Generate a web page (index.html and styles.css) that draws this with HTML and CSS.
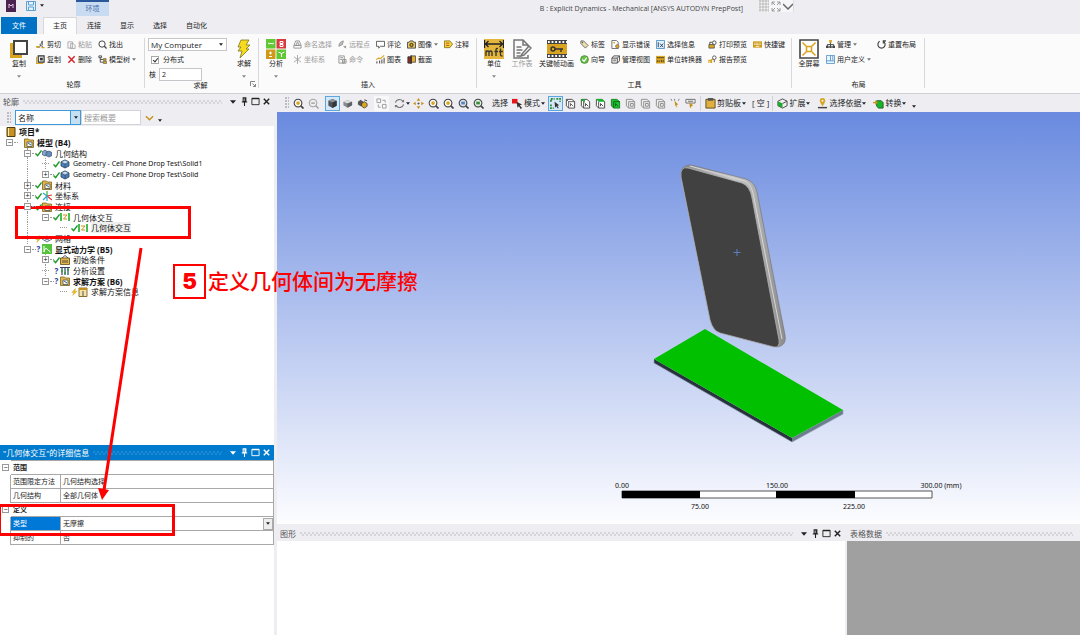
FILE: index.html
```html
<!DOCTYPE html>
<html lang="zh-CN">
<head>
    <meta charset="UTF-8">
    <meta name="viewport" content="width=device-width, initial-scale=1.0">
    <title>B : Explicit Dynamics - Mechanical</title>
    <link rel="stylesheet" href="styles.css">
</head>
<body>
    <svg class="sprite" aria-hidden="true">
        <!-- common -->
        <symbol id="caret" viewBox="0 0 5 3"><path d="M0 0h5L2.5 3z" fill="currentColor"/></symbol>
        <symbol id="pin" viewBox="0 0 10 10"><path d="M3.5 1h3v4h-3zM2 5.500h6M5 5.500V10" fill="none" stroke="currentColor" stroke-width="1.2"/><path d="M5 1h1.500v4H5z" fill="currentColor"/></symbol>
        <symbol id="box" viewBox="0 0 10 10"><path d="M1 1.500h8v7H1z" fill="none" stroke="currentColor"/><path d="M1 1h8v1.500H1z" fill="currentColor"/></symbol>
        <symbol id="close" viewBox="0 0 10 10"><path d="M2 2l6 6M8 2L2 8" stroke="currentColor" stroke-width="1.6"/></symbol>
        <!-- ribbon, large -->
        <symbol id="copy-big" viewBox="0 0 20 20"><path d="M1 4h12v15H1z" fill="#d9a520"/><path d="M5 2h13v13H5z" fill="#fff" stroke="#444" stroke-width="2"/></symbol>
        <symbol id="bolt-big" viewBox="0 0 20 20"><path d="M7 1h8l-3 5h4l-4 4h3L6 19l2-7H4l3-4H4z" fill="#f6dc1c" stroke="#7d7320" stroke-width=".8"/></symbol>
        <symbol id="analysis" viewBox="0 0 20 20"><path d="M0 0h9.500v9.500H0zM10.500 10.500H20V20h-9.500z" fill="#5fc832"/><path d="M10.500 0H20v9.500h-9.500z" fill="#d8383f"/><path d="M0 10.500h9.500V20H0z" fill="#cf9a17"/><path d="M2 4l2 1 1-1 1 1 2-1M3 14h3M4.500 12.500v3M3 17.500h3M12.500 13q3 3 6 0M15.500 14v4M14 2.500h3v2h-3zM14 5.500h3v2h-3z" fill="none" stroke="#fff"/></symbol>
        <symbol id="units" viewBox="0 0 20 20"><path d="M0 0h20v20H0z" fill="#e5b63c"/><path d="M1 5h18M4.500 2L1.500 5l3 3M15.500 2l3 3-3 3M.5 1v8M19.500 1v8" fill="none" stroke="#222" stroke-width="1.3"/><path d="M2 17v-5.500M2 13q2-2 3 0v4M5 13q2-2 3 0v4M12 17v-6q0-2 2-1.500M10.500 12.500H14M16.500 9.500V16q0 1 2 1M15 12.500h4" fill="none" stroke="#333" stroke-width="1.3"/></symbol>
        <symbol id="sheet" viewBox="0 0 20 20"><path d="M16 8V6l-5-5H2v18h14v-3M11 1v5h5M4.500 8h5M4.500 11h6M4.500 14h4M4.500 17h5M10 15l7-8 2 2-7 7-3 1z" fill="none" stroke="#777" stroke-width="1.5"/></symbol>
        <symbol id="film" viewBox="0 0 20 20"><path d="M0 1h20v18H0z" fill="#444"/><path d="M0 5h20v10H0z" fill="#d9a520"/><path d="M1 3h19M1 17h19" stroke="#fff" stroke-width="1.8" stroke-dasharray="1.8 1.8"/><circle cx="6" cy="10" r="2" fill="none" stroke="#333" stroke-width="1.4"/><path d="M8 10h8M14 10v3" stroke="#333" stroke-width="1.4"/></symbol>
        <symbol id="full" viewBox="0 0 20 20"><path d="M1 1h18v18H1z" fill="#fff" stroke="#444" stroke-width="1.6"/><path d="M7.500 7.500h5v5h-5zM3.500 3.500l4 4M16.500 3.500l-4 4M3.500 16.500l4-4M16.500 16.500l-4-4" fill="none" stroke="#d9a520" stroke-width="1.6"/></symbol>
        <!-- ribbon, small -->
        <symbol id="cut" viewBox="0 0 10 10"><path d="M1 8h3l3-7M4 5l4 3M7 1v5" fill="none" stroke="#555"/><path d="M0 7.500h4M6 8.500h3.500" stroke="#d9a520" stroke-width="1.5"/></symbol>
        <symbol id="paste" viewBox="0 0 10 10"><path d="M1 2h5v7H1zM4 4h3l2 2v3.500H4z" fill="#f6f6f6" stroke="#999" stroke-width=".8"/></symbol>
        <symbol id="find" viewBox="0 0 10 10"><circle cx="4.500" cy="4.500" r="3.500" fill="none" stroke="#444" stroke-width="1.1"/><path d="M7 7l2.500 2.500" stroke="#444" stroke-width="1.4"/></symbol>
        <symbol id="copy" viewBox="0 0 10 10"><path d="M.5 2v7.500H8" fill="none" stroke="#d9a520" stroke-width="1.4"/><path d="M2.500 1H9v7H2.500z" fill="#eee" stroke="#333" stroke-width="1.3"/><path d="M4.500 3h3v3h-3z" fill="#333"/></symbol>
        <symbol id="del" viewBox="0 0 10 10"><path d="M1.500 1.500l7 7M8.500 1.500l-7 7" stroke="#d3242b" stroke-width="1.6"/></symbol>
        <symbol id="tree" viewBox="0 0 10 10"><path d="M1 1h3v2H1zM2.500 3v5H6M2.500 5H6" fill="none" stroke="#444"/><path d="M6 4h3v2H6zM6 7h3.500v2.500H6z" fill="#d9a520" stroke="#444" stroke-width=".6"/></symbol>
        <symbol id="named" viewBox="0 0 10 10"><path d="M1 9h8V6L7 1H3L1 6zM3 6l2-4 2 4zM1 6h8" fill="none" stroke="#888" stroke-width=".9"/></symbol>
        <symbol id="axes-gray" viewBox="0 0 10 10"><path d="M5 0v10M1 2l8 6M9 2L1 8" stroke="#999" stroke-width=".9"/></symbol>
        <symbol id="remote" viewBox="0 0 10 10"><path d="M1 7q0-5 5-6l-1 4zM6 7l3 2" fill="#bbb" stroke="#888" stroke-width=".8"/><circle cx="8" cy="7.500" r="1.200" fill="#999"/></symbol>
        <symbol id="cmd" viewBox="0 0 10 10"><path d="M1 1h6v8H1zM2.500 3h3M2.500 5h2M5 5h4v4H5zM6 7h2" fill="#f4f4f4" stroke="#888" stroke-width=".9"/></symbol>
        <symbol id="comment" viewBox="0 0 10 10"><path d="M.5 1.500h9V7H5L3 9V7H.5z" fill="#fff" stroke="#555"/></symbol>
        <symbol id="chart" viewBox="0 0 10 10"><path d="M1 9.500V7M4 9.500V6M6.500 9.500V5M9 9.500V3" stroke="#555" stroke-width="1.2"/><path d="M0 5l3-1.500 2 .5L9 .5" fill="none" stroke="#d9a520" stroke-width="1.2"/></symbol>
        <symbol id="camera" viewBox="0 0 10 10"><path d="M.5 2.500h2l1-1.500h3l1 1.500h2V9h-9z" fill="#e8c868" stroke="#444"/><circle cx="5" cy="5.500" r="1.800" fill="#d9a520" stroke="#222"/></symbol>
        <symbol id="section" viewBox="0 0 10 10"><path d="M1 2h4v7H1z" fill="#8b2c20" stroke="#333"/><path d="M5 1h4.500v7H5z" fill="#e2b030" stroke="#555"/><path d="M4.500 0v10" stroke="#222"/></symbol>
        <symbol id="note" viewBox="0 0 10 10"><path d="M.5 1h6l3 3.500-3 4h-6z" fill="#f3dc3a" stroke="#7a6b10" stroke-width=".9"/><path d="M2 3.500h4M2 6h4" stroke="#c23" stroke-width=".9"/></symbol>
        <symbol id="tag" viewBox="0 0 10 10"><path d="M1 1h3l5 5-3 3-5-5z" fill="#eadfa8" stroke="#555" stroke-width=".9"/><circle cx="2.800" cy="2.800" r=".8" fill="#555"/></symbol>
        <symbol id="guide" viewBox="0 0 10 10"><circle cx="5" cy="5" r="4.300" fill="#6cbf4b" stroke="#3f8f2a"/><path d="M2.500 5l2 2 3-4" fill="none" stroke="#fff" stroke-width="1.3"/></symbol>
        <symbol id="err" viewBox="0 0 10 10"><path d="M1 .5h5l2 2v7H1z" fill="#fff" stroke="#666"/><path d="M2.500 3h2" stroke="#d9a520" stroke-width="1.4"/><circle cx="7" cy="7" r="2" fill="#d9a520" stroke="#666" stroke-width=".6"/></symbol>
        <symbol id="views" viewBox="0 0 10 10"><path d="M1 3.500h6V9H1zM1 3.500L3 1h6.500v5.500L7 9M7 3.500L9.500 1" fill="#f4f4f4" stroke="#444"/><path d="M2.500 5h3v2h-3z" fill="#888"/></symbol>
        <symbol id="selinfo" viewBox="0 0 10 10"><path d="M.5 .5h9v9h-9z" fill="#e3f1fb" stroke="#4a90c8"/><path d="M2.500 2.500V8M4.500 4l3.500 4M8 4L4.500 8" stroke="#235"/></symbol>
        <symbol id="conv" viewBox="0 0 10 10"><path d="M0 1h10v8.500H0z" fill="#d9a520"/><path d="M1 3h8M1.500 8V6M3.500 8V6M6 8V5.500M8 8V5.500" stroke="#333" stroke-width=".9"/></symbol>
        <symbol id="print" viewBox="0 0 10 10"><path d="M1 5h6v4H1z" fill="#d9a520" stroke="#444" stroke-width=".8"/><path d="M2 5V2.500h3" fill="none" stroke="#444"/><circle cx="7" cy="3" r="2" fill="#fff" stroke="#444"/></symbol>
        <symbol id="report" viewBox="0 0 10 10"><path d="M1 9V6h2v3M4 9V5h2" fill="none" stroke="#d9a520" stroke-width="1.2"/><circle cx="7" cy="3" r="2" fill="#fff" stroke="#555"/><path d="M7 5v3" stroke="#555"/></symbol>
        <symbol id="keys" viewBox="0 0 10 10"><path d="M0 1.500h10v7H0z" fill="#cf9a17"/><path d="M1.500 3.500h7M1.500 5h7" stroke="#fff" stroke-dasharray="1 .6"/><path d="M3 7h4" stroke="#fff"/></symbol>
        <symbol id="org" viewBox="0 0 10 10"><path d="M3.500 0h3v3h-3z" fill="#d9a520"/><path d="M5 3v2M1.500 7V5h7v2M5 5v2" fill="none" stroke="#444"/><path d="M0 6.500h3V9H0zM3.700 6.500h2.600V9H3.700zM7 6.500h3V9H7z" fill="#444"/></symbol>
        <symbol id="layout" viewBox="0 0 10 10"><path d="M.5 .5h9v9h-9zM5 .5v6M.5 6.500h9M7.500 1v5" fill="#eaf4fc" stroke="#4a90c8" stroke-width=".9"/></symbol>
        <symbol id="reset" viewBox="0 0 10 10"><path d="M3 1.500a4 4 0 1 0 4 0M7 4V1h3" fill="none" stroke="#444" stroke-width="1.3"/></symbol>
        <!-- view toolbar -->
        <symbol id="zoom-y" viewBox="0 0 12 12"><circle cx="5.500" cy="5.500" r="4.200" fill="#fff" stroke="#444" stroke-width="1.2"/><circle cx="5.500" cy="5.500" r="2" fill="#d9a520"/><path d="M8.500 8.500L11.500 11.500" stroke="#444" stroke-width="1.8"/></symbol>
        <symbol id="zoom-g" viewBox="0 0 12 12"><circle cx="5.500" cy="5.500" r="4.200" fill="#eee" stroke="#999"/><path d="M8.500 8.500l3 3M3.500 5.500h4" stroke="#999" stroke-width="1.3"/></symbol>
        <symbol id="zoom-b" viewBox="0 0 12 12"><circle cx="5.500" cy="5.500" r="4.200" fill="#d8e4f4" stroke="#444" stroke-width="1.2"/><path d="M3.500 4h4v3h-4z" fill="#5f83b5"/><path d="M8.500 8.500l3 3" stroke="#444" stroke-width="1.8"/></symbol>
        <symbol id="zoom-n" viewBox="0 0 12 12"><circle cx="5.500" cy="5.500" r="4.200" fill="#e2f2e0" stroke="#444" stroke-width="1.2"/><path d="M3.500 4h4v3h-4z" fill="#3a8c3a"/><path d="M8.500 8.500l3 3" stroke="#444" stroke-width="1.8"/></symbol>
        <symbol id="cube" viewBox="0 0 12 12"><path d="M6 1l4.500 2v5.500L6 11 1.500 8.500V3z" fill="#4e5358"/><path d="M6 1l4.500 2L6 5 1.500 3z" fill="#8b9196"/><path d="M6 5v6l4.500-2.500V3z" fill="#33373b"/></symbol>
        <symbol id="slab" viewBox="0 0 12 12"><path d="M6 2.500L11 4v4l-5 2.500L1.500 8V4z" fill="#85898d"/><path d="M6 2.500L11 4 6 6 1.500 4z" fill="#dcdcdc"/><path d="M6 6v4.500L11 8V4z" fill="#5d6165"/></symbol>
        <symbol id="cubes" viewBox="0 0 12 12"><path d="M1 4l3-2 3 2v3L4 9 1 7z" fill="#555"/><path d="M5 6l3-2 3 2v3l-3 2-3-2z" fill="#d9a520" stroke="#333" stroke-width=".8"/><path d="M8 2l3 1" stroke="#333"/></symbol>
        <symbol id="link" viewBox="0 0 12 12"><path d="M1 1h4v4H1zM7 7h4v4H7zM7 2.500h3V5M2.500 7v3H5" fill="none" stroke="#999"/></symbol>
        <symbol id="rot" viewBox="0 0 12 12"><path d="M1.500 5a4.500 4.500 0 0 1 8-1.500M10.500 7a4.500 4.500 0 0 1-8 1.500" fill="none" stroke="#777" stroke-width="1.3"/><path d="M8 4.500h3v-3zM4 7.500H1v3z" fill="#777"/></symbol>
        <symbol id="pan" viewBox="0 0 12 12"><path d="M6 0l2 3H4zM6 12l2-3H4zM0 6l3-2v4zM12 6L9 4v4z" fill="#c8921a"/><circle cx="6" cy="6" r="1.200" fill="#555"/></symbol>
        <symbol id="mode" viewBox="0 0 12 12"><path d="M0 1h6v5H0z" fill="#e8141c"/><path d="M5 4l6 3-2.500 1L11 11l-1.500 1-2-3L6 10.500z" fill="#333"/></symbol>
        <symbol id="pick" viewBox="0 0 12 12"><path d="M1 4V1h4M7 1h4v3M1 7v4h3" fill="none" stroke="#2b8a33" stroke-width="2" stroke-dasharray="2 1"/><path d="M5 4l5 4-2 .5 1.500 2.500-1 .5L7 9l-1.500 1.500z" fill="#333"/></symbol>
        <symbol id="sel-box" viewBox="0 0 12 12"><path d="M1.500 1.500h6l3 2.500v7H4L1.500 8.500z" fill="#fff" stroke="#444"/><path d="M4 4h6.500M4 4v7M1.500 1.500L4 4M6 6l3 3M6 6v3" fill="none" stroke="#444" stroke-width=".9"/></symbol>
        <symbol id="sel-edge" viewBox="0 0 12 12"><path d="M1.500 1.500h6l3 2.500v7H4L1.500 8.500z" fill="#fff" stroke="#444"/><path d="M4 4v7M1.500 1.500L4 4" stroke="#444"/><path d="M1 2h3.500v3" fill="none" stroke="#1ba32b" stroke-width="1.6"/><path d="M6 6l3 3M6 6v3" stroke="#444"/></symbol>
        <symbol id="sel-face" viewBox="0 0 12 12"><path d="M1.500 1.500h6l3 2.500v7H4L1.500 8.500z" fill="#fff" stroke="#444"/><path d="M1 1h7l3 3H4z" fill="#16b52a"/><path d="M4 4v7M6 6l3 3M6 6v3" stroke="#444"/></symbol>
        <symbol id="sel-body" viewBox="0 0 12 12"><path d="M1.500 1.500h6l3 2.500v7H4L1.500 8.500z" fill="#17c62c" stroke="#167a20"/><path d="M4 4h6.500M4 4v7M6 6l3 3M6 6v3" stroke="#0d5c16" fill="none"/></symbol>
        <symbol id="sel-gray" viewBox="0 0 12 12"><path d="M1.500 1.500h6l3 2.500v7H4L1.500 8.500z" fill="#eee" stroke="#8b8b8b"/><path d="M4 4h6.500M4 4v7M6 6h3v3H6z" fill="none" stroke="#8b8b8b"/></symbol>
        <symbol id="hit" viewBox="0 0 12 12"><path d="M1 1l1 2M5 1v2M10 1L9 3" stroke="#777"/><path d="M5 3l4 4-2 .5L8 11 5.500 8z" fill="#c8921a"/></symbol>
        <symbol id="probe" viewBox="0 0 12 12"><path d="M1 1.500h10v4H1z" fill="#fff" stroke="#666"/><path d="M3 3.500h6" stroke="#555"/><path d="M5 5l4 3-2 1-.5 2.500L5 9z" fill="#c8921a"/></symbol>
        <symbol id="clip" viewBox="0 0 12 12"><path d="M1 1.500h10V11H1z" fill="#dfb040" stroke="#5c4a18"/><path d="M3 0h6v3H3z" fill="#555"/></symbol>
        <symbol id="extend" viewBox="0 0 12 12"><path d="M6 1l5 2.500v5L6 11 1 8.500v-5z" fill="#eee" stroke="#444"/><path d="M1 3.500L6 6v5L1 8.500z" fill="#1fa82f"/><path d="M6 6l5-2.500" stroke="#444"/></symbol>
        <symbol id="place" viewBox="0 0 12 12"><path d="M6 0a3 3 0 0 1 3 3q0 2-3 6-3-4-3-6a3 3 0 0 1 3-3z" fill="#d9a520"/><circle cx="6" cy="3" r="1" fill="#fff"/><path d="M1 10.500h10" stroke="#444" stroke-width="1.6"/></symbol>
        <symbol id="convert" viewBox="0 0 12 12"><path d="M4 3h5l2 2v6H6L4 9z" fill="#17b52a" stroke="#165f20"/><path d="M0 5h4M2.500 3l2 2-2 2" fill="none" stroke="#c8921a" stroke-width="1.4"/></symbol>
        <!-- tree -->
        <symbol id="project" viewBox="0 0 10 10"><path d="M1 .5h8v9H1z" fill="#c8921a" stroke="#4d3a0c"/><path d="M2.500 1v8" stroke="#fff" stroke-width=".8"/></symbol>
        <symbol id="folder" viewBox="0 0 10 10"><path d="M.5 1h4l1 1h4v7.500h-9z" fill="#e3b646" stroke="#7d6220" stroke-width=".8"/><path d="M3 4h5v4.500H3z" fill="#f8f5e4" stroke="#456" stroke-width=".8"/><path d="M4 5l3 2" stroke="#368"/></symbol>
        <symbol id="geom" viewBox="0 0 10 10"><path d="M0 4l3-2 3 2v2.500L3 8 0 6.500z" fill="#8aa6c8" stroke="#35506f" stroke-width=".7"/><path d="M4 4.500L7 3l3 1.500v3L7 9 4 7.500z" fill="#6a8db8" stroke="#35506f" stroke-width=".7"/></symbol>
        <symbol id="solid" viewBox="0 0 10 10"><path d="M5 1l4 2v4L5 9 1 7V3z" fill="#4d7fb5" stroke="#27415f" stroke-width=".8"/><path d="M5 1l4 2-4 2-4-2z" fill="#c4dcf0" stroke="#27415f" stroke-width=".6"/><path d="M5 5v4" stroke="#27415f" stroke-width=".6"/></symbol>
        <symbol id="axes" viewBox="0 0 10 10"><path d="M5 5V0" stroke="#29b23a" stroke-width="1.2"/><path d="M5 5l5 4M5 5l5-1" stroke="#e03434" stroke-width="1.2"/><path d="M5 5L1 9M5 5L1 2M5 5v5" stroke="#2aa8c8" stroke-width="1.2"/></symbol>
        <symbol id="contact" viewBox="0 0 10 10"><path d="M1 1v8M9 1v8" stroke="#16b02a" stroke-width="1.6"/><path d="M3 3h4L3.500 7H7" fill="none" stroke="#c8921a"/></symbol>
        <symbol id="mesh" viewBox="0 0 10 10"><path d="M0 5l5-3 5 3-5 3zM2.500 3.500l5 3M7.500 3.500l-5 3" fill="#dfe6f4" stroke="#567" stroke-width=".8"/></symbol>
        <symbol id="dyn" viewBox="0 0 10 10"><path d="M0 0h10v10H0z" fill="#55c43c"/><path d="M2 2v6M2 8q1-5 3-3t3.500 3" fill="none" stroke="#fff"/></symbol>
        <symbol id="cond" viewBox="0 0 10 10"><path d="M.5 3h9v6.500h-9z" fill="#e3b646" stroke="#5c4718" stroke-width=".8"/><path d="M2 3l3-2.500L8 3M3 5v3M5 5v3M7 5v3" fill="none" stroke="#444" stroke-width=".9"/></symbol>
        <symbol id="setup" viewBox="0 0 10 10"><path d="M0 1.500h10M2 1v8M5 1v8M8 1v8" stroke="#346" stroke-width="1.2"/><path d="M1 5h2M4 7h2M7 4h2" stroke="#36a04a" stroke-width="2"/></symbol>
        <symbol id="info" viewBox="0 0 10 10"><path d="M1 1h8v8.500H1z" fill="#f3e3a6" stroke="#7d6220" stroke-width=".9"/><path d="M1 1h8v2H1z" fill="#c8921a"/><path d="M5 4v5" stroke="#555"/></symbol>
        <symbol id="ok" viewBox="0 0 8 8"><path d="M.5 4.500L3 7l4.500-6" fill="none" stroke="#1e9b27" stroke-width="1.7"/></symbol>
        <symbol id="todo" viewBox="0 0 8 8"><path d="M5 0L1 4.500h2.500L2 8l5-5H4.500z" fill="#f2c015" stroke="#b98a10" stroke-width=".4"/></symbol>
    </svg>

    <header class="titlebar">
        <svg class="logo" viewBox="0 0 10 12"><path d="M0 0h10v12H0z" fill="#4a2350"/><path d="M3 8V4l2 2 2-2v4" fill="none" stroke="#e2c3e2"/></svg>
        <button class="quick" aria-label="保存"><svg viewBox="0 0 10 10"><path d="M.5 .5h9v9h-9z" fill="#e6f2fb" stroke="#5d9fd2"/><path d="M2.500 .5V4h5V.5M2.500 9.500V6h5v3.500" fill="none" stroke="#5d9fd2"/></svg></button>
        <button class="drop" aria-label="自定义"><svg class="car"><use href="#caret"/></svg></button>
        <span class="context">环境</span>
        <h1>B : Explicit Dynamics - Mechanical [ANSYS AUTODYN PrepPost]</h1>
        <div class="window-tools">
            <svg viewBox="0 0 10 12"><path d="M1 0v12M4 0v12M7 0v12M10 0v12M0 1h10M0 4h10M0 7h10M0 10h10" stroke="#aaa" stroke-width=".7"/></svg>
            <svg viewBox="0 0 10 12"><path d="M1 5V2h3M6 2h3v3M9 8v3H6M4 11H1V8M1 2l3 3M9 2L6 5M9 11L6 8M1 11l3-3" fill="none" stroke="#888" stroke-width=".8"/></svg>
            <svg viewBox="0 0 10 12"><path d="M0 4l5 5 5-5" fill="none" stroke="#666" stroke-width="1.5"/></svg>
        </div>
    </header>

    <nav class="tabs">
        <button class="file">文件</button>
        <button class="active">主页</button>
        <button>连接</button>
        <button>显示</button>
        <button>选择</button>
        <button>自动化</button>
    </nav>

    <section class="ribbon">
        <div class="group outline-group">
            <div class="tools">
                <button class="big"><svg><use href="#copy-big"/></svg>复制<svg class="car"><use href="#caret"/></svg></button>
                <div class="col">
                    <button><svg><use href="#cut"/></svg>剪切</button>
                    <button><svg><use href="#copy"/></svg>复制</button>
                </div>
                <div class="col">
                    <button disabled><svg><use href="#paste"/></svg>粘贴</button>
                    <button><svg><use href="#del"/></svg>删除</button>
                </div>
                <div class="col">
                    <button><svg><use href="#find"/></svg>找出</button>
                    <button><svg><use href="#tree"/></svg>模型树<svg class="car"><use href="#caret"/></svg></button>
                </div>
            </div>
            <h2>轮廓</h2>
        </div>
        <div class="group solve-group">
            <div class="tools">
                <div class="solve-form">
                    <div class="picker">
                        <select aria-label="求解器"><option>My Computer</option></select>
                        <svg class="car"><use href="#caret"/></svg>
                    </div>
                    <label class="dist"><input type="checkbox" checked>分布式</label>
                    <label class="cores">核<input type="text" value="2"></label>
                </div>
                <button class="big"><svg><use href="#bolt-big"/></svg>求解<svg class="car"><use href="#caret"/></svg></button>
            </div>
            <h2>求解</h2>
            <svg class="launcher" viewBox="0 0 6 6"><path d="M.5 5V.5H5M2.500 2.500l3 3M5.500 3v2.500H3" fill="none" stroke="#777" stroke-width=".9"/></svg>
        </div>
        <div class="group insert-group">
            <div class="tools">
                <button class="big"><svg><use href="#analysis"/></svg>分析<svg class="car"><use href="#caret"/></svg></button>
                <div class="col">
                    <button disabled><svg><use href="#named"/></svg>命名选择</button>
                    <button disabled><svg><use href="#axes-gray"/></svg>坐标系</button>
                </div>
                <div class="col">
                    <button disabled><svg><use href="#remote"/></svg>远程点</button>
                    <button disabled><svg><use href="#cmd"/></svg>命令</button>
                </div>
                <div class="col">
                    <button><svg><use href="#comment"/></svg>评论</button>
                    <button><svg><use href="#chart"/></svg>图表</button>
                </div>
                <div class="col">
                    <button><svg><use href="#camera"/></svg>图像<svg class="car"><use href="#caret"/></svg></button>
                    <button><svg><use href="#section"/></svg>截面</button>
                </div>
                <div class="col">
                    <button><svg><use href="#note"/></svg>注释</button>
                </div>
            </div>
            <h2>插入</h2>
        </div>
        <div class="group tool-group">
            <div class="tools">
                <button class="big"><svg><use href="#units"/></svg>单位<svg class="car"><use href="#caret"/></svg></button>
                <button class="big" disabled><svg><use href="#sheet"/></svg>工作表</button>
                <button class="big"><svg><use href="#film"/></svg>关键帧动画</button>
                <div class="col">
                    <button><svg><use href="#tag"/></svg>标签</button>
                    <button><svg><use href="#guide"/></svg>向导</button>
                </div>
                <div class="col">
                    <button><svg><use href="#err"/></svg>显示错误</button>
                    <button><svg><use href="#views"/></svg>管理视图</button>
                </div>
                <div class="col">
                    <button><svg><use href="#selinfo"/></svg>选择信息</button>
                    <button><svg><use href="#conv"/></svg>单位转换器</button>
                </div>
                <div class="col">
                    <button><svg><use href="#print"/></svg>打印预览</button>
                    <button><svg><use href="#report"/></svg>报告预览</button>
                </div>
                <div class="col">
                    <button><svg><use href="#keys"/></svg>快捷键</button>
                </div>
            </div>
            <h2>工具</h2>
        </div>
        <div class="group layout-group">
            <div class="tools">
                <button class="big"><svg><use href="#full"/></svg>全屏幕</button>
                <div class="col">
                    <button><svg><use href="#org"/></svg>管理<svg class="car"><use href="#caret"/></svg></button>
                    <button><svg><use href="#layout"/></svg>用户定义<svg class="car"><use href="#caret"/></svg></button>
                </div>
                <div class="col">
                    <button><svg><use href="#reset"/></svg>重置布局</button>
                </div>
            </div>
            <h2>布局</h2>
        </div>
    </section>

    <main class="workspace">
        <aside class="side">
            <section class="outline">
                <div class="panel-head">
                    <h3>轮廓</h3><span class="dots"></span>
                    <button aria-label="菜单"><svg class="car"><use href="#caret"/></svg></button>
                    <button aria-label="固定"><svg><use href="#pin"/></svg></button>
                    <button aria-label="最大化"><svg><use href="#box"/></svg></button>
                    <button aria-label="关闭"><svg><use href="#close"/></svg></button>
                </div>
                <div class="search">
                    <span class="grip"></span>
                    <div class="picker name-picker">
                        <select aria-label="筛选"><option>名称</option></select>
                        <span class="arrow"><svg class="car"><use href="#caret"/></svg></span>
                    </div>
                    <input type="text" placeholder="搜索概要" aria-label="搜索概要">
                    <button class="expand" aria-label="展开"><svg viewBox="0 0 10 6"><path d="M1 1l4 4 4-4" fill="none" stroke="#c8921a" stroke-width="1.6"/></svg></button>
                    <svg class="car"><use href="#caret"/></svg>
                </div>
                <ul class="tree">
                    <li class="root"><svg><use href="#project"/></svg><b>项目*</b></li>
                    <li class="l1"><i class="exp">−</i><svg><use href="#folder"/></svg><b>模型 (B4)</b></li>
                    <li class="l2 trunk"><i class="exp">−</i><svg class="st"><use href="#ok"/></svg><svg><use href="#geom"/></svg>几何结构</li>
                    <li class="l3 trunk branch small"><i class="leaf"></i><svg class="st"><use href="#ok"/></svg><svg><use href="#solid"/></svg>Geometry - Cell Phone Drop Test\Solid1</li>
                    <li class="l3 trunk small"><i class="exp">+</i><svg class="st"><use href="#ok"/></svg><svg><use href="#solid"/></svg>Geometry - Cell Phone Drop Test\Solid</li>
                    <li class="l2 trunk"><i class="exp">+</i><svg class="st"><use href="#ok"/></svg><svg><use href="#folder"/></svg>材料</li>
                    <li class="l2 trunk"><i class="exp">+</i><svg class="st"><use href="#ok"/></svg><svg><use href="#axes"/></svg>坐标系</li>
                    <li class="l2 trunk"><i class="exp">−</i><svg class="st"><use href="#ok"/></svg><svg><use href="#folder"/></svg>连接</li>
                    <li class="l3 trunk"><i class="exp">−</i><svg class="st"><use href="#ok"/></svg><svg><use href="#contact"/></svg>几何体交互</li>
                    <li class="l4 trunk"><i class="leaf"></i><svg class="st"><use href="#ok"/></svg><svg><use href="#contact"/></svg><span class="picked">几何体交互</span></li>
                    <li class="l2 trunk"><i class="leaf"></i><svg class="st"><use href="#todo"/></svg><svg><use href="#mesh"/></svg>网格</li>
                    <li class="l2"><i class="exp">−</i><em class="st">?</em><svg><use href="#dyn"/></svg><b>显式动力学 (B5)</b></li>
                    <li class="l3 branch"><i class="exp">+</i><svg class="st"><use href="#ok"/></svg><svg><use href="#cond"/></svg>初始条件</li>
                    <li class="l3 branch"><i class="leaf"></i><em class="st">?</em><svg><use href="#setup"/></svg>分析设置</li>
                    <li class="l3"><i class="exp">−</i><em class="st">?</em><svg><use href="#folder"/></svg><b>求解方案 (B6)</b></li>
                    <li class="l4"><i class="leaf"></i><svg class="st"><use href="#todo"/></svg><svg><use href="#info"/></svg>求解方案信息</li>
                </ul>
            </section>

            <section class="details">
                <div class="panel-head selected">
                    <h3>"几何体交互"的详细信息</h3><span class="dots"></span>
                    <button aria-label="菜单"><svg class="car"><use href="#caret"/></svg></button>
                    <button aria-label="固定"><svg><use href="#pin"/></svg></button>
                    <button aria-label="最大化"><svg><use href="#box"/></svg></button>
                    <button aria-label="关闭"><svg><use href="#close"/></svg></button>
                </div>
                <table>
                    <colgroup><col class="c-tog"><col class="c-key"><col></colgroup>
                    <tr class="cat"><td class="tog"><i class="exp">−</i></td><th colspan="2">范围</th></tr>
                    <tr><td class="tog"></td><td class="key">范围限定方法</td><td>几何结构选择</td></tr>
                    <tr><td class="tog"></td><td class="key">几何结构</td><td>全部几何体</td></tr>
                    <tr class="cat"><td class="tog"><i class="exp">−</i></td><th colspan="2">定义</th></tr>
                    <tr class="current">
                        <td class="tog"></td><td class="key"><label for="type">类型</label></td>
                        <td><div class="picker"><select id="type"><option>无摩擦</option></select><span class="arrow"><svg class="car"><use href="#caret"/></svg></span></div></td>
                    </tr>
                    <tr><td class="tog"></td><td class="key">抑制的</td><td>否</td></tr>
                </table>
            </section>
        </aside>

        <section class="stage">
            <div class="viewbar">
                <span class="grip"></span>
                <div class="set">
                    <button aria-label="放大"><svg><use href="#zoom-y"/></svg></button>
                    <button aria-label="缩小"><svg><use href="#zoom-g"/></svg></button>
                </div>
                <div class="set">
                    <button class="on" aria-label="着色"><svg><use href="#cube"/></svg></button>
                    <button aria-label="实体"><svg><use href="#slab"/></svg></button>
                    <button aria-label="随机颜色"><svg><use href="#cubes"/></svg></button>
                </div>
                <button class="soft" aria-label="视图链接"><svg><use href="#link"/></svg></button>
                <div class="set">
                    <button class="wide" aria-label="旋转"><svg><use href="#rot"/></svg><svg class="car"><use href="#caret"/></svg></button>
                    <button aria-label="平移"><svg><use href="#pan"/></svg></button>
                    <button aria-label="缩放"><svg><use href="#zoom-y"/></svg></button>
                    <button aria-label="框选缩放"><svg><use href="#zoom-y"/></svg></button>
                    <button aria-label="适合窗口"><svg><use href="#zoom-b"/></svg></button>
                    <button aria-label="放大镜"><svg><use href="#zoom-n"/></svg></button>
                </div>
                <span class="word">选择</span>
                <button class="wide"><svg><use href="#mode"/></svg>模式<svg class="car"><use href="#caret"/></svg></button>
                <div class="set">
                    <button class="on" aria-label="智能选择"><svg><use href="#pick"/></svg></button>
                    <button aria-label="顶点"><svg><use href="#sel-box"/></svg></button>
                    <button aria-label="边"><svg><use href="#sel-edge"/></svg></button>
                    <button aria-label="面"><svg><use href="#sel-face"/></svg></button>
                    <button aria-label="体"><svg><use href="#sel-body"/></svg></button>
                    <button aria-label="节点"><svg><use href="#sel-gray"/></svg></button>
                    <button aria-label="单元面"><svg><use href="#sel-gray"/></svg></button>
                    <button aria-label="单元"><svg><use href="#sel-gray"/></svg></button>
                    <button aria-label="击中点"><svg><use href="#hit"/></svg></button>
                    <button aria-label="标签点"><svg><use href="#probe"/></svg></button>
                </div>
                <div class="menus">
                    <button class="wide"><svg><use href="#clip"/></svg>剪贴板<svg class="car"><use href="#caret"/></svg></button>
                    <span>[ 空 ]</span>
                </div>
                <div class="menus">
                    <button class="wide"><svg><use href="#extend"/></svg>扩展<svg class="car"><use href="#caret"/></svg></button>
                    <button class="wide"><svg><use href="#place"/></svg>选择依据<svg class="car"><use href="#caret"/></svg></button>
                    <button class="wide"><svg><use href="#convert"/></svg>转换<svg class="car"><use href="#caret"/></svg></button>
                    <svg class="car overflow"><use href="#caret"/></svg>
                </div>
            </div>

            <div class="viewport">
                <svg class="scene" viewBox="0 0 803 412">
                    <defs>
                        <linearGradient id="rim" x1="0" x2="1"><stop offset="0" stop-color="#8b8b8b"/><stop offset=".5" stop-color="#c9c9c9"/><stop offset="1" stop-color="#8d8d8d"/></linearGradient>
                    </defs>
                    <g transform="translate(-277 -112)">
                        <!-- floor plate -->
                        <path d="M654 359l138 79v4l-138-79z" fill="#28323e"/>
                        <path d="M792 438l51-28v4l-51 28z" fill="#6d7d90"/>
                        <path d="M705 329l138 81-51 28-138-79z" fill="#00c000"/>
                        <path d="M654 360v3l138 79 51-28v-4" fill="none" stroke="#8b98a8" stroke-width=".6"/>
                        <!-- phone -->
                        <path d="M681 174q0-9 10-9l55 14q9 3 11 13l28 143q2 10-7 12l-5-1z" fill="url(#rim)" stroke="#6f6f6f" stroke-width=".6"/>
                        <path d="M690 166l55 15q6 3 8 12l29 146" fill="none" stroke="#d6d6d6"/>
                        <path d="M681 177q-1-11 7-9l54 15q8 3 10 15l27 142q1 8-5 7l-54-14q-7-2-10-13z" fill="#414141" stroke="#b0b0b0" stroke-width=".8"/>
                        <path d="M737 249v7M733.500 252.500h7" stroke="#5a7fc4"/>
                        <!-- scale -->
                        <path d="M622 491h310v7H622z" fill="#fff" stroke="#555"/>
                        <path d="M622 491h78v7h-78zM776 491h79v7h-79z" fill="#000"/>
                        <g class="ticks">
                            <text x="622" y="488">0.00</text>
                            <text x="777" y="488">150.00</text>
                            <text x="941" y="488">300.00 (mm)</text>
                            <text x="700" y="509">75.00</text>
                            <text x="854" y="509">225.00</text>
                        </g>
                    </g>
                </svg>
            </div>

            <div class="bottom">
                <section class="graph">
                    <div class="panel-head">
                        <h3>图形</h3><span class="dots"></span>
                        <button aria-label="菜单"><svg class="car"><use href="#caret"/></svg></button>
                        <button aria-label="固定"><svg><use href="#pin"/></svg></button>
                        <button aria-label="最大化"><svg><use href="#box"/></svg></button>
                        <button aria-label="关闭"><svg><use href="#close"/></svg></button>
                    </div>
                </section>
                <section class="data">
                    <div class="panel-head"><h3>表格数据</h3><span class="dots"></span></div>
                </section>
            </div>
        </section>
    </main>

    <!-- step callout drawn over the window -->
    <div class="mark mark-tree"></div>
    <div class="mark mark-type"></div>
    <svg class="pointer" viewBox="0 0 50 254"><path d="M43 1L6 243" stroke="#fe0000" stroke-width="3"/><path d="M0 241l11 2-7 10z" fill="#fe0000"/></svg>
    <div class="callout"><span class="step">5</span><span>定义几何体间为无摩擦</span></div>
</body>
</html>
```

FILE: styles.css
```css
* {
    box-sizing: border-box;
}
body {
    margin: 0;
    min-height: 100vh;
    display: flex;
    flex-direction: column;
    position: relative;
    background: #eeeef2;
    color: #222;
    font-family: "Open Sans", "Noto Sans CJK SC", sans-serif;
    font-size: 7px;
    line-height: 10px;
}
button, input, select {
    font: inherit;
    color: inherit;
    margin: 0;
    padding: 0;
    border: 0;
    background: none;
    border-radius: 0;
}
button {
    display: flex;
    align-items: center;
    white-space: nowrap;
}
button:disabled {
    color: #999;
}
h1, h2, h3 {
    margin: 0;
    font-size: 7px;
    font-weight: normal;
}
svg {
    display: block;
    flex: none;
}
.sprite {
    display: none;
}

/* title bar */
.titlebar {
    display: flex;
    align-items: flex-start;
    height: 17px;
    padding-left: 6px;
}
.logo {
    width: 10px;
    height: 12px;
}
.quick {
    margin: 1px 0 0 10px;
}
.quick svg {
    width: 10px;
    height: 10px;
}
.drop {
    margin: 4px 0 0 4px;
}
.context {
    width: 33px;
    height: 16px;
    margin-left: 32px;
    border-top: 2px solid #2a579a;
    background: #c9dbf1;
    color: #3f6ea8;
    text-align: center;
    line-height: 14px;
}
.titlebar h1 {
    flex: 1;
    padding-right: 16px;
    text-align: right;
    line-height: 17px;
    color: #444;
}
.window-tools {
    display: flex;
    gap: 2px;
    margin-right: 286px;
    background: #f6f6f8;
    border-right: 1px solid #ddd;
}
.window-tools svg {
    width: 10px;
    height: 12px;
}

/* ribbon tabs */
.tabs {
    display: flex;
    gap: 1px;
    height: 17px;
    padding-left: 1px;
}
.tabs button {
    justify-content: center;
    padding: 0 9px;
}
.tabs .file {
    width: 36px;
    margin-right: 5px;
    background: #0072c6;
    color: #fff;
}
.tabs .active {
    background: #fcfcfc;
    border: 1px solid #d8d8dc;
    border-bottom: 0;
}

/* ribbon */
.ribbon {
    display: flex;
    height: 60px;
    background: #fbfbfb;
    border-bottom: 1px solid #d0d0d4;
}
.group {
    position: relative;
    display: flex;
    flex-direction: column;
    justify-content: space-between;
    padding: 3px 0 4px 6px;
}
.group::after {
    content: '';
    position: absolute;
    right: 0;
    top: 4px;
    bottom: 5px;
    width: 1px;
    background: #d8d8da;
}
.outline-group {
    width: 145px;
    padding-left: 8px;
}
.solve-group {
    width: 114px;
    padding-left: 3px;
}
.insert-group {
    width: 218px;
}
.tool-group {
    width: 315px;
}
.layout-group {
    width: 133px;
}
.group h2 {
    padding-right: 6px;
    text-align: center;
}
.tools {
    display: flex;
    gap: 6px;
}
.big {
    flex-direction: column;
    min-width: 22px;
    height: 43px;
    padding-top: 2px;
}
.big svg {
    width: 20px;
    height: 20px;
}
.col button {
    height: 15px;
    gap: 2px;
}
.col svg {
    width: 9px;
    height: 9px;
}
.picker {
    position: relative;
    display: flex;
    align-items: center;
}
.picker select {
    appearance: none;
    width: 100%;
    height: 100%;
    padding-left: 2px;
}
.solve-form {
    width: 79px;
    display: flex;
    flex-direction: column;
    gap: 2px;
}
.solve-form .picker {
    height: 13px;
    margin-top: 1px;
    border: 1px solid #c6c6ca;
    background: #fff;
    font-size: 8px;
}
.dist {
    display: flex;
    align-items: center;
    height: 13px;
    gap: 4px;
    padding-left: 3px;
}
.dist input {
    appearance: none;
    width: 8px;
    height: 8px;
    border: 1px solid #aaa;
    background: #fff;
}
.dist input:checked::after {
    content: '';
    display: block;
    width: 2px;
    height: 4px;
    margin-left: 2px;
    border: solid #333;
    border-width: 0 1px 1px 0;
    transform: rotate(40deg);
}
.cores {
    display: flex;
    align-items: center;
    gap: 3px;
    padding-left: 1px;
}
.cores input {
    width: 43px;
    height: 13px;
    border: 1px solid #c6c6ca;
    background: #fff;
    padding-left: 2px;
}
.launcher {
    position: absolute;
    right: 3px;
    bottom: 6px;
    width: 6px;
    height: 6px;
}

/* docked panels */
.workspace {
    flex: 1;
    display: grid;
    grid-template-columns: 274px 1fr;
    gap: 3px;
}
.side, .stage {
    display: flex;
    flex-direction: column;
    min-width: 0;
}
.panel-head {
    display: flex;
    align-items: center;
    gap: 2px;
    height: 15px;
    padding: 0 3px;
    color: #222;
}
.panel-head h3 {
    color: #555;
    font-size: 8px;
}
.panel-head .dots {
    flex: 1;
    height: 4px;
    margin: 0 4px 0 2px;
    background: radial-gradient(circle at 1px 1px, #9a9aa2 0, transparent 1px) 0 0 / 4px 4px, radial-gradient(circle at 3px 3px, #9a9aa2 0, transparent 1px) 0 0 / 4px 4px;
}
.panel-head button svg {
    width: 9px;
    height: 9px;
}
.panel-head.selected {
    background: #007acc;
    color: #fff;
}
.panel-head.selected h3 {
    color: #fff;
}
.panel-head.selected .dots {
    background: radial-gradient(circle at 1px 1px, #6bb4e6 0, transparent 1px) 0 0 / 4px 4px, radial-gradient(circle at 3px 3px, #6bb4e6 0, transparent 1px) 0 0 / 4px 4px;
}
.grip {
    width: 4px;
    height: 12px;
    background: radial-gradient(circle at 1px 1px, #bcbcc2 1px, transparent 1px) 0 0 / 3px 3px;
}
.outline {
    flex: 1;
    background: #fff;
}
.outline .panel-head, .search {
    background: #eeeef2;
}
.search {
    display: flex;
    align-items: center;
    height: 17px;
    padding-left: 7px;
    font-size: 8px;
}
.search input {
    width: 60px;
    height: 15px;
    padding-left: 2px;
    border: 1px solid #d4d4d8;
    background: #fff;
}
.search input::placeholder {
    color: #999;
}
.name-picker {
    width: 66px;
    height: 15px;
    margin-left: 4px;
    border: 1px solid #3c9bd8;
    background: #fff;
}
.picker .arrow {
    position: absolute;
    right: 0;
    width: 10px;
    height: 100%;
    display: flex;
    align-items: center;
    justify-content: center;
    background: #c5dff3;
    border-left: 1px solid #3c9bd8;
    pointer-events: none;
}
.expand {
    margin: 0 4px;
}
.expand svg {
    width: 9px;
    height: 6px;
}

/* outline tree, 32px for every three rows */
.tree {
    margin: 0;
    padding: 0;
    list-style: none;
    font-size: 8px;
    color: #111;
}
.tree li {
    position: relative;
    display: flex;
    align-items: center;
    height: 11px;
    line-height: 11px;
    white-space: nowrap;
}
.tree li:nth-child(3n) {
    height: 10px;
}
.tree .root {
    padding-left: 6px;
}
.tree .l1 {
    padding-left: 6px;
}
.tree .l2 {
    padding-left: 24px;
}
.tree .l3 {
    padding-left: 42px;
}
.tree .l4 {
    padding-left: 60px;
}
.tree .small {
    font-family: "Noto Sans", sans-serif;
    font-size: 7px;
}
.tree svg {
    width: 10px;
    height: 10px;
    margin-right: 3px;
}
.tree .st {
    width: 7px;
    height: 8px;
    margin: 0;
    font-style: normal;
    font-weight: bold;
    line-height: 8px;
    color: #1c3f94;
    text-align: center;
}
.l1 .exp {
    margin-right: 11px;
}
.l2 .exp, .l3 .exp, .leaf {
    margin-right: 4px;
}
.exp {
    width: 7px;
    height: 7px;
    border: 1px solid #999;
    background: #fff;
    font: 7px/5px "Liberation Sans", sans-serif;
    text-align: center;
    z-index: 1;
}
.tree .exp::after {
    content: '';
    position: absolute;
    width: 4px;
    margin: 2px 0 0 2px;
    border-top: 1px dotted #999;
}
.leaf {
    width: 7px;
    height: 1px;
    border-top: 1px dotted #999;
}
.trunk::before, .branch::after {
    content: '';
    position: absolute;
    top: 0;
    bottom: 0;
    left: 27px;
    border-left: 1px dotted #999;
}
.branch::after {
    left: 45px;
}
.picked {
    background: #efefef;
}

/* details */
.details {
    height: 190px;
    background: #fff;
}
.details table {
    width: 100%;
    border-collapse: collapse;
    table-layout: fixed;
}
.c-tog {
    width: 10px;
}
.c-key {
    width: 50px;
}
.details td, .details th {
    height: 14px;
    padding: 0 2px;
    border: 1px solid #a8a8a8;
    text-align: left;
    line-height: 10px;
}
.details .tog {
    padding: 0 1px;
    border-color: transparent #a8a8a8 transparent transparent;
}
.details .exp {
    display: block;
}
.details .key {
    white-space: nowrap;
}
.details .cat th {
    border-left: 0;
}
.details .cat .tog {
    border-right-color: transparent;
}
.current .key {
    background: #0078d7;
    color: #fff;
}
.details .picker {
    height: 12px;
    margin-right: -2px;
}
.details .picker select {
    padding: 0;
}
.details .arrow {
    background: #eee;
    border: 1px solid #aaa;
}

/* view toolbar */
.viewbar {
    display: flex;
    align-items: center;
    height: 18px;
    padding-left: 8px;
    font-size: 8px;
}
.set, .menus {
    display: flex;
    align-items: center;
}
.set {
    padding: 0 2px;
}
.viewbar button {
    justify-content: center;
    width: 15px;
    height: 15px;
}
.viewbar svg {
    width: 11px;
    height: 11px;
}
.viewbar .wide {
    width: auto;
    gap: 1px;
    padding: 0 1px;
}
.viewbar .on {
    border: 1px solid #5ba7e0;
    background: #d5e8f8;
}
.viewbar .soft {
    background: #f8f8fa;
    margin: 0 2px;
}
.word {
    margin: 0 3px 0 4px;
}
.menus {
    gap: 5px;
    padding: 0 3px;
    border-left: 1px solid #d2d2d6;
}
.viewport {
    flex: 1;
    min-height: 0;
    background: linear-gradient(#698adf, #fdfdff);
}
.scene {
    width: 100%;
    height: 100%;
}
.ticks {
    font-size: 7px;
    font-family: "Noto Sans", sans-serif;
    text-anchor: middle;
    fill: #111;
}

.bottom {
    display: grid;
    grid-template-columns: 1fr 233px;
    gap: 2px;
    height: 111px;
    padding-top: 2px;
}
.graph, .data {
    display: flex;
    flex-direction: column;
}
.bottom .panel-head {
    background: #eeeef2;
}
.graph {
    background: #fff;
}
.data {
    background: #a0a0a0;
}

/* drop-down carets, after the icon sizes they override */
button svg.car, .picker svg.car, .search svg.car, .viewbar svg.car {
    width: 4px;
    height: 3px;
    margin: 0;
}
.col button svg.car {
    color: #777;
}
.big svg.car {
    margin: 6px 0 0;
    color: #888;
}
.solve-form .picker svg.car {
    position: absolute;
    right: 3px;
    pointer-events: none;
}
.panel-head button svg.car {
    width: 6px;
    height: 4px;
    margin: 0 2px;
}
.search > svg.car, .viewbar svg.overflow {
    margin-top: 6px;
}

/* step callout */
.mark {
    position: absolute;
    border: 3px solid #fe0000;
}
.mark-tree {
    left: 15px;
    top: 206px;
    width: 176px;
    height: 33px;
}
.mark-type {
    left: -2px;
    top: 504px;
    width: 177px;
    height: 32px;
}
.pointer {
    position: absolute;
    left: 98px;
    top: 247px;
    width: 50px;
    height: 254px;
}
.callout {
    position: absolute;
    left: 173px;
    top: 264px;
    display: flex;
    align-items: center;
    gap: 2px;
    color: #fe0000;
    font-size: 21px;
    font-weight: 500;
    line-height: 35px;
    white-space: nowrap;
}
.step {
    width: 33px;
    border: 2px solid #fe0000;
    text-align: center;
    font: 900 22px/31px Inter, sans-serif;
}
```
